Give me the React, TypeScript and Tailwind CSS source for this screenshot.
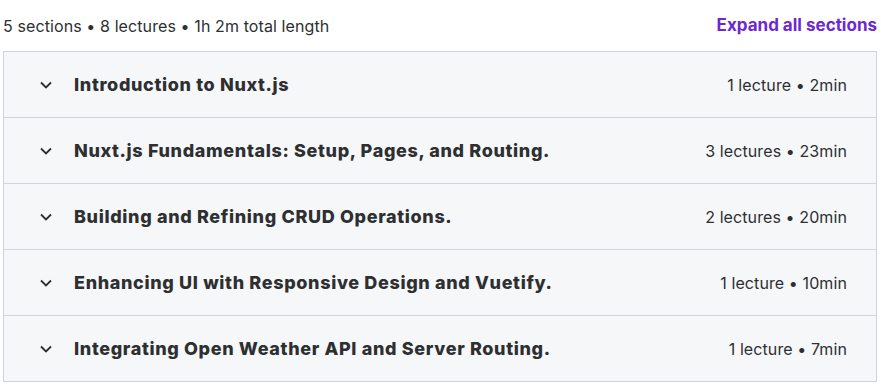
const sections = [
  { title: 'Introduction to Nuxt.js', meta: '1 lecture • 2min' },
  { title: 'Nuxt.js Fundamentals: Setup, Pages, and Routing.', meta: '3 lectures • 23min' },
  { title: 'Building and Refining CRUD Operations.', meta: '2 lectures • 20min' },
  { title: 'Enhancing UI with Responsive Design and Vuetify.', meta: '1 lecture • 10min' },
  { title: 'Integrating Open Weather API and Server Routing.', meta: '1 lecture • 7min' },
]

function Chevron() {
  return (
    <svg width="12" height="8" viewBox="0 0 12 8" fill="none" className="shrink-0">
      <polyline points="1,1.5 6,6.5 11,1.5" stroke="#2d2f31" strokeWidth="1.8" />
    </svg>
  )
}

export default function App() {
  return (
    <main className="w-[881px] bg-white pl-[3px] pr-[4px] font-['Inter',sans-serif] text-[#2d2f31]">
      {/* Kurs: podsumowanie + link */}
      <div className="flex h-[51px] items-center justify-between pt-px">
        <span className="text-[16px] tracking-[0.1px]">5 sections • 8 lectures • 1h 2m total length</span>
        <button className="text-[17px] font-bold text-[#6d28d2]">Expand all sections</button>
      </div>

      <div className="border-x border-b border-[#d1d2e0]">
        {sections.map((s) => (
          <div
            key={s.title}
            className="flex h-[66px] items-center justify-between border-t border-[#d1d2e0] bg-[#f6f7f9] pr-[29px] pl-[36px]"
          >
            <div className="flex items-center gap-[22px]">
              <Chevron />
              <span className="text-[18px] font-extrabold tracking-[0.65px]">{s.title}</span>
            </div>
            <span className="text-[16px] tracking-[0.1px]">{s.meta}</span>
          </div>
        ))}
      </div>
    </main>
  )
}
